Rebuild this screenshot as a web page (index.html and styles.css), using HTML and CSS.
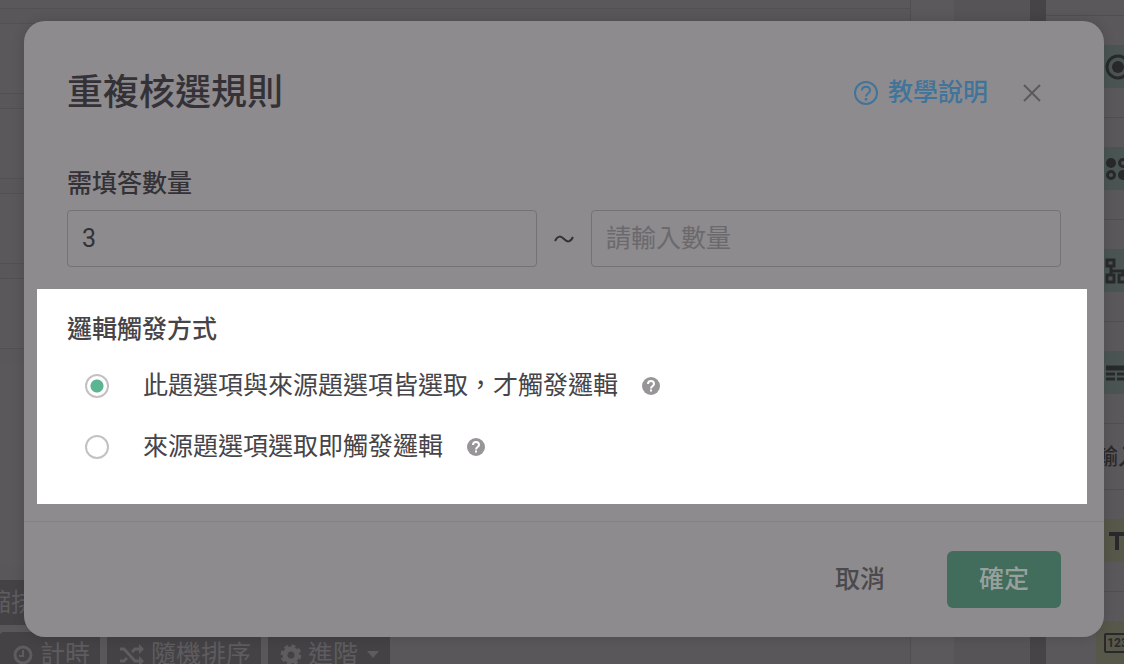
FILE: index.html
```html
<!DOCTYPE html>
<html lang="zh-Hant">
<head>
    <meta charset="UTF-8">
    <meta name="viewport" content="width=device-width, initial-scale=1.0">
    <title>重複核選規則</title>
    <link rel="stylesheet" href="styles.css">
</head>
<body>
    <div class="editor">
        <div class="canvas">
            <div class="canvas-main">
                <div class="card card-first"></div>
                <div class="card"></div>
                <div class="card"></div>
                <div class="card"></div>
                <div class="card"></div>
                <div class="card card-last"></div>
                <div class="tools tools-top">
                    <button class="tool tool-indent" type="button">縮排</button>
                </div>
                <div class="tools">
                    <button class="tool" type="button">
                        <svg width="22" height="22" viewBox="0 0 22 22" fill="none" stroke="currentColor" stroke-width="3"><circle cx="11" cy="11" r="8"/><path d="M11 6v6H7" stroke-width="2"/></svg>
                        計時
                    </button>
                    <button class="tool" type="button">
                        <svg width="26" height="22" viewBox="0 0 26 22" fill="none" stroke="currentColor" stroke-width="3"><path d="M1 5h4l11 12h5M1 17h4l3-3M13 8l3-3h5"/><path d="M20 0l5 5-5 5zM20 12l5 5-5 5z" fill="currentColor" stroke="none"/></svg>
                        隨機排序
                    </button>
                    <button class="tool" type="button">
                        <svg width="22" height="22" viewBox="0 0 22 22" fill="none" stroke="currentColor"><circle cx="11" cy="11" r="6" stroke-width="5"/><circle cx="11" cy="11" r="9" stroke-width="3" stroke-dasharray="4 3.07"/></svg>
                        進階
                        <svg class="caret" width="14" height="8" viewBox="0 0 14 8"><path d="M1 0h12L7 7z" fill="currentColor"/></svg>
                    </button>
                </div>
            </div>
            <div class="canvas-gap"></div>
            <div class="canvas-edge"></div>
        </div>
        <div class="scrollbar"></div>
        <div class="sidebar">
            <div class="type-row type-start"></div>
            <div class="type-row">
                <div class="tile">
                    <svg width="30" height="30" viewBox="0 0 30 30"><circle cx="15" cy="15" r="11" fill="none" stroke="currentColor" stroke-width="3"/><circle cx="15" cy="15" r="6" fill="currentColor"/></svg>
                </div>
            </div>
            <div class="type-row">
                <div class="tile">
                    <svg width="30" height="30" viewBox="0 0 30 30" fill="none" stroke="currentColor" stroke-width="3"><circle cx="8" cy="9" r="5" fill="currentColor" stroke="none"/><circle cx="20" cy="9" r="3.5"/><circle cx="8" cy="21" r="3.5"/><circle cx="20" cy="21" r="5" fill="currentColor" stroke="none"/></svg>
                </div>
            </div>
            <div class="type-row">
                <div class="tile">
                    <svg width="30" height="30" viewBox="0 0 30 30" fill="none" stroke="currentColor" stroke-width="3"><path d="M4 4h7v6H4zM4 19h7v7H4zM16 19h7v7h-7zM8 10v9M8 15h12v4"/></svg>
                </div>
            </div>
            <div class="type-row">
                <div class="tile">
                    <svg width="30" height="30" viewBox="0 0 30 30" fill="none" stroke="currentColor"><path d="M3 10h25" stroke-width="5"/><path d="M3 16h25M3 21h25" stroke-width="3" stroke-dasharray="9 2"/></svg>
                </div>
            </div>
            <div class="type-row type-heading">輸入</div>
            <div class="type-row">
                <div class="tile tile-input">
                    <svg width="30" height="30" viewBox="0 0 30 30" fill="none" stroke="currentColor" stroke-width="4"><path d="M6 8h17M14 8v16"/></svg>
                </div>
            </div>
            <div class="type-row">
                <div class="tile tile-input"><span class="digits">123</span></div>
            </div>
        </div>
    </div>

    <div class="overlay">
        <form class="modal" role="dialog" aria-labelledby="modal-title">
            <div class="modal-header">
                <h1 id="modal-title">重複核選規則</h1>
                <a class="guide" href="#">
                    <svg width="26" height="26" viewBox="0 0 26 26" fill="none" stroke="currentColor" stroke-width="2"><circle cx="13" cy="13" r="11"/><path d="M9 10.5c0-5 8-5 8 0 0 3-4 3-4 6"/><path d="M13 18v2.5" stroke-width="2.5"/></svg>
                    教學說明
                </a>
                <button class="close" type="button" aria-label="關閉">
                    <svg width="18" height="18" viewBox="0 0 18 18" fill="none" stroke="currentColor" stroke-width="2"><path d="M1 1l16 16M17 1L1 17"/></svg>
                </button>
            </div>

            <div class="amount">
                <label class="label" for="min">需填答數量</label>
                <div class="range">
                    <input class="field" type="text" id="min" value="3">
                    <span class="tilde"><svg width="20" height="8" viewBox="0 0 20 8" fill="none" stroke="currentColor" stroke-width="2"><path d="M1 6C4 0 7 1 10 4s6 4 9-2"/></svg></span>
                    <input class="field" type="text" id="max" placeholder="請輸入數量" aria-label="數量上限">
                </div>
            </div>

            <fieldset class="trigger">
                <legend class="label">邏輯觸發方式</legend>
                <div class="option">
                    <input class="radio" type="radio" name="trigger" id="both" checked>
                    <label for="both">此題選項與來源題選項皆選取，才觸發邏輯</label>
                    <svg class="help" width="18" height="18" viewBox="0 0 18 18"><circle cx="9" cy="9" r="9" fill="currentColor"/><path d="M6 7c0-4 6-4 6 0 0 2-3 2-3 4.5M9 12.500v2" fill="none" stroke="#fff" stroke-width="2"/></svg>
                </div>
                <div class="option">
                    <input class="radio" type="radio" name="trigger" id="source">
                    <label for="source">來源題選項選取即觸發邏輯</label>
                    <svg class="help" width="18" height="18" viewBox="0 0 18 18"><circle cx="9" cy="9" r="9" fill="currentColor"/><path d="M6 7c0-4 6-4 6 0 0 2-3 2-3 4.5M9 12.500v2" fill="none" stroke="#fff" stroke-width="2"/></svg>
                </div>
            </fieldset>

            <div class="modal-footer">
                <button class="btn" type="button">取消</button>
                <button class="btn btn-primary" type="submit">確定</button>
            </div>
        </form>
    </div>
</body>
</html>
```

FILE: styles.css
```css
* {
    box-sizing: border-box;
}

body {
    margin: 0;
    min-height: 100vh;
    background-color: #595759;
    color: #343236;
    font-family: Roboto, "Noto Sans CJK TC", sans-serif;
    font-size: 25px;
    line-height: 36px;
}

button, input {
    font: inherit;
    color: inherit;
}

button {
    border: 0;
    background: none;
    white-space: nowrap;
    cursor: pointer;
}

svg {
    display: block;
    flex: none;
}

/* editor behind the dialog */
.editor {
    position: absolute;
    inset: 0;
    display: flex;
    overflow: hidden;
}

.canvas {
    flex: 1;
    display: flex;
}

.canvas-main {
    flex: 1;
    min-width: 0;
    border-right: 1px solid #504e51;
}

.card {
    height: 71px;
    margin-bottom: 14px;
    border: solid #525053;
    border-width: 1px 0;
    background-color: #5a585b;
}

.card-first {
    height: 9px;
    border-top: 0;
}

.card-last {
    height: 203px;
    border: 0;
}

.canvas-gap {
    width: 43px;
    background-color: #5b595c;
}

.canvas-edge {
    width: 76px;
    background-color: #565457;
}

.tools {
    display: flex;
    gap: 7px;
}

.tools-top {
    margin-bottom: 7px;
}

.tool {
    display: flex;
    align-items: center;
    gap: 6px;
    height: 45px;
    padding: 0 10px 0 12px;
    border-radius: 4px;
    background-color: #444245;
    color: #5e5c5f;
}

.tool-indent {
    margin-left: -26px;
}

.caret {
    margin-left: 2px;
}

.scrollbar {
    width: 16px;
    background-color: #464447;
}

.sidebar {
    width: 78px;
    overflow: hidden;
    background-color: #5a585b;
    color: #29292c;
}

.type-row {
    height: 102px;
    padding: 29px 0 0 50px;
    border-bottom: 1px solid #504e51;
}

.type-start {
    height: 16px;
    padding: 0;
}

.type-heading {
    height: 66px;
    padding: 15px 0 0 50px;
    font-size: 22px;
    font-weight: 500;
    white-space: nowrap;
}

.tile {
    display: flex;
    align-items: center;
    justify-content: center;
    width: 43px;
    height: 43px;
    background-color: #4a5553;
}

.tile-input {
    background-color: #57584a;
}

.digits {
    padding: 0 1px;
    border: 2px solid;
    border-radius: 2px;
    font-size: 12px;
    font-weight: 700;
    line-height: 16px;
}

/* dialog */
.overlay {
    position: relative;
    padding: 21px 20px 27px 24px;
}

.modal {
    overflow: hidden;
    border-radius: 21px;
    background-color: #8d8b8e;
    box-shadow: 0 0 12px rgba(0, 0, 0, 0.15);
}

.modal-header {
    display: flex;
    align-items: center;
    padding: 44px 63px 45px 43px;
}

h1 {
    flex: 1;
    margin: 0;
    font-size: 36px;
    font-weight: 500;
    line-height: 56px;
}

.guide {
    display: flex;
    align-items: center;
    gap: 9px;
    margin-right: 35px;
    color: #41749a;
    font-weight: 500;
    text-decoration: none;
}

.close {
    padding: 0;
    color: #5c5a5d;
}

.amount {
    padding: 0 43px;
}

.label {
    display: block;
    padding: 0;
    font-weight: 500;
}

.range {
    display: flex;
    align-items: center;
    margin-top: 8px;
}

.field {
    flex: 1;
    min-width: 0;
    height: 57px;
    padding: 0 14px;
    border: 1px solid #747275;
    border-radius: 4px;
    background: none;
}

.field::placeholder {
    color: #6b696c;
    opacity: 1;
}

.tilde {
    display: flex;
    justify-content: center;
    width: 54px;
}

/* highlighted block */
.trigger {
    margin: 22px 17px 17px 13px;
    padding: 23px 30px 39px;
    border: 0;
    background-color: #fff;
    color: #464448;
}

.trigger .label {
    float: left;
    width: 100%;
    margin-bottom: 20px;
}

.option {
    clear: both;
    display: flex;
    align-items: center;
}

.option + .option {
    margin-top: 25px;
}

.radio {
    appearance: none;
    flex: none;
    width: 24px;
    height: 24px;
    margin: 0 34px 0 18px;
    border: 2px solid #c4c1c5;
    border-radius: 50%;
}

.radio:checked {
    background: radial-gradient(circle, #5cb592 6px, #fff 7px);
}

.help {
    margin-left: 24px;
    color: #989599;
}

.modal-footer {
    display: flex;
    justify-content: flex-end;
    gap: 30px;
    padding: 29px 43px;
    border-top: 1px solid #838184;
}

.btn {
    height: 57px;
    padding: 0 32px;
    border-radius: 6px;
    color: #4b494c;
    font-weight: 500;
}

.btn-primary {
    background-color: #426c5b;
    color: #97a09c;
}
```
